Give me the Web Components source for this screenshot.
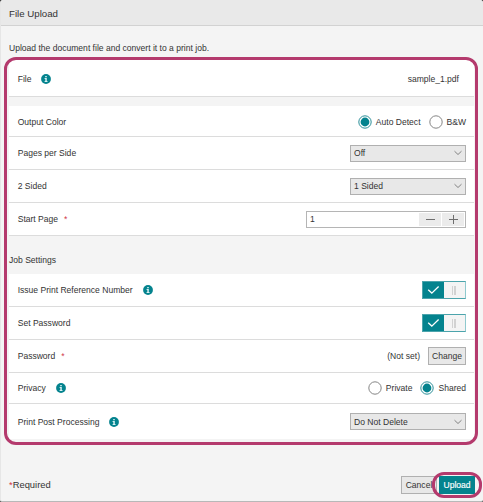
<!DOCTYPE html>
<html lang="en">
<head>
<meta charset="utf-8">
<title>File Upload</title>
<style>
html,body{margin:0;height:100%;overflow:hidden}
body{font:8.55px/12px "Liberation Sans",Arial,sans-serif;color:#333;background:#333}
</style>
</head>
<body>
<upload-dialog></upload-dialog>
<script>
const define = (name, html) => customElements.define(name, class extends HTMLElement {
  constructor() {
    super();
    this.attachShadow({ mode: 'open' }).innerHTML = html;
  }
});

define('info-icon', `<style>:host{display:block;width:10px;height:10px;margin-left:10px}svg{display:block}</style>
<svg width="10" height="10" viewBox="0 0 10 10"><circle cx="5" cy="5" r="4.9" fill="#04838e"/><path d="M4.2 2h1.6v1.3H4.2zM3.6 4.1h2.2v3h.7v.9H3.6v-.9h.7V5h-.7z" fill="#d6f0f2"/></svg>`);

define('req-mark', `<style>:host{display:block;margin-left:6px;color:#cf3545}</style>*`);

define('setting-row', `<style>
:host{display:flex;align-items:center;box-sizing:border-box;height:var(--h,33px);padding:var(--top,0) 8px 0 8.7px;background:#fff;border-bottom:1px solid #dcdcdc}
:host([last]){border-bottom:0}
.label,.value{display:flex;align-items:center;white-space:nowrap}
.value{margin-left:auto}
</style><div class="label"><slot name="label"></slot></div><div class="value"><slot></slot></div>`);

define('radio-option', `<style>
:host{display:flex;align-items:center;margin-left:8px}
svg{display:block;margin-right:4px}
.dot{display:none}
:host([checked]) .dot{display:block}
:host([checked]) .ring{stroke:#2b8e98}
</style>
<svg width="14" height="14" viewBox="0 0 14 14"><circle class="ring" cx="7" cy="7" r="6.2" fill="#fff" stroke="#858585"/><circle class="dot" cx="7" cy="7" r="4.4" fill="#04838e"/></svg><slot></slot>`);

define('select-box', `<style>
:host{display:flex;align-items:center;justify-content:space-between;box-sizing:border-box;width:116px;height:17px;padding:0 3px;background:#e8e8e8;border:1px solid #b0b0b0}
svg{display:block}
</style><slot></slot><svg width="8" height="6" viewBox="0 0 8 6"><path d="M.5 1.2 4 4.5l3.5-3.3" fill="none" stroke="#777" stroke-width=".9"/></svg>`);

define('number-stepper', `<style>
:host{display:flex;box-sizing:border-box;width:160px;height:17px;padding:0 1px 0 0;background:#fff;border:1px solid #b5b5b5}
.num{flex:1;padding:1px 3px 2px;line-height:13px}
.btn{display:flex;align-items:center;justify-content:center;width:22px;margin:1px 0 1px 1px;background:#ebebeb}
svg{display:block}
</style><div class="num"><slot></slot></div>
<div class="btn"><svg width="11" height="11"><path d="M1 5.5h9" stroke="#6e6e6e"/></svg></div>
<div class="btn"><svg width="11" height="11"><path d="M1 5.5h9M5.5 1v9" stroke="#6e6e6e"/></svg></div>`);

define('toggle-switch', `<style>
:host{display:flex;box-sizing:border-box;width:44px;height:18px;border:1px solid #4ca4ac;border-right-color:#8fc9ce;background:#f4f4f4}
.on{width:21px;background:#04838e;display:flex;align-items:center;justify-content:center}
.grip{flex:1;display:flex;align-items:center;justify-content:center;gap:1px;padding-right:2px}
.grip i{width:1.5px;height:9px;background:#d2d2d2}
svg{display:block}
</style><div class="on"><svg width="13" height="10" viewBox="0 0 13 10"><path d="m1.2 4.8 3.6 3.3 6.8-6.6" fill="none" stroke="#fff" stroke-width="1.3"/></svg></div><div class="grip"><i></i><i></i></div>`);

define('push-button', `<style>
:host{display:flex;align-items:center;justify-content:center;box-sizing:border-box;width:var(--w,38px);height:18px;background:#e8e8e8;border:1px solid #b0b0b0;white-space:nowrap}
:host([primary]){background:#04838e;border-color:#04838e;color:#fff;-webkit-text-stroke:.15px #fff}
</style><slot></slot>`);

define('highlight-frame', `<style>
:host{display:block;position:absolute;box-sizing:border-box;border:3px solid #b43a6d;border-radius:12px;pointer-events:none}
</style>`);

define('upload-dialog', `<style>
:host{display:flex;flex-direction:column;position:relative;box-sizing:border-box;width:483px;height:502px;overflow:hidden;background:#f4f4f4;border-bottom:1px solid #b8b8b8;border-left:1px solid #e6e6e6;border-radius:3px 3px 2px 2px}
header{box-sizing:border-box;height:26px;padding:1.5px 0 0 8px;line-height:24px;font-size:9.7px;background:#e9e9e9;border-bottom:1px solid #d2d2d2}
.intro{height:34px;padding:16px 0 0 8px;box-sizing:border-box}
section{margin:0 9px 0 8px}
.print{margin-top:9px}
h2{margin:0;height:38px;padding-top:18px;box-sizing:border-box;font:inherit}
footer{flex:1;display:flex;align-items:flex-end;padding:0 8px 7px}
.req{font-size:9.4px;padding-bottom:3px}.req span{color:#cf3545}
.actions{display:flex;gap:2px;margin-left:auto}
.all{left:3px;top:57px;width:474px;height:388px}
.send{left:431px;top:472px;width:50px;height:26px}
</style>
<header>File Upload</header>
<div class="intro">Upload the document file and convert it to a print job.</div>
<section><setting-row style="--h:37px;--top:2px;padding-right:15px"><span slot="label">File</span><info-icon slot="label"></info-icon>sample_1.pdf</setting-row></section>
<section class="print">
<setting-row style="--h:31px;--top:1px"><span slot="label">Output Color</span><radio-option checked>Auto Detect</radio-option><radio-option>B&amp;W</radio-option></setting-row>
<setting-row><span slot="label">Pages per Side</span><select-box>Off</select-box></setting-row>
<setting-row><span slot="label">2 Sided</span><select-box>1 Sided</select-box></setting-row>
<setting-row><span slot="label">Start Page</span><req-mark slot="label"></req-mark><number-stepper>1</number-stepper></setting-row>
</section>
<section><h2>Job Settings</h2>
<setting-row><span slot="label">Issue Print Reference Number</span><info-icon slot="label"></info-icon><toggle-switch></toggle-switch></setting-row>
<setting-row><span slot="label">Set Password</span><toggle-switch></toggle-switch></setting-row>
<setting-row><span slot="label">Password</span><req-mark slot="label"></req-mark><span style="margin-right:8px">(Not set)</span><push-button>Change</push-button></setting-row>
<setting-row style="--h:31px"><span slot="label">Privacy</span><info-icon slot="label"></info-icon><radio-option>Private</radio-option><radio-option checked>Shared</radio-option></setting-row>
<setting-row last style="--h:35px"><span slot="label">Print Post Processing</span><info-icon slot="label"></info-icon><select-box>Do Not Delete</select-box></setting-row>
</section>
<footer><div class="req"><span>*</span>Required</div><div class="actions"><push-button style="--w:36px">Cancel</push-button><push-button primary style="--w:36px">Upload</push-button></div></footer>
<highlight-frame class="all"></highlight-frame><highlight-frame class="send"></highlight-frame>`);
</script>
</body>
</html>
